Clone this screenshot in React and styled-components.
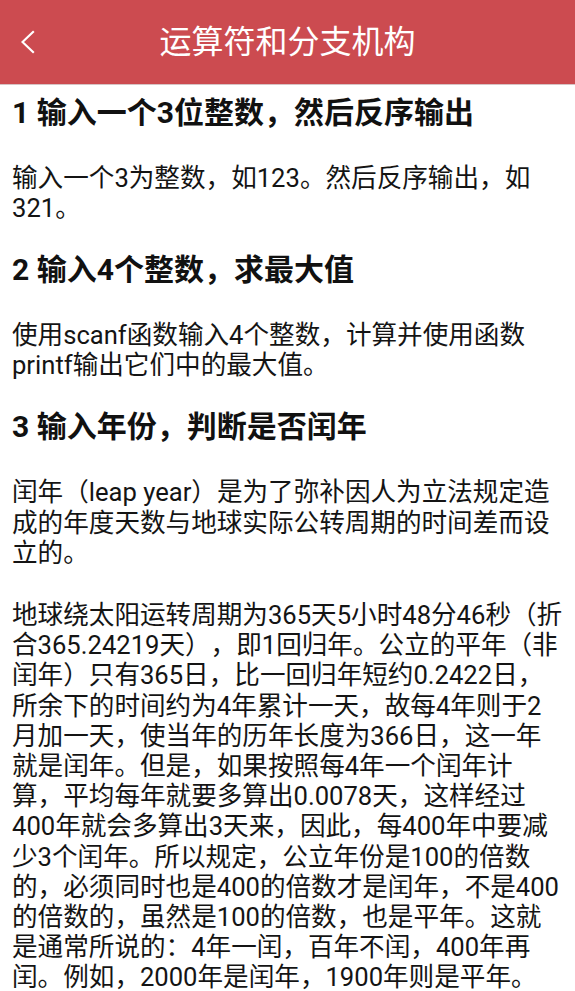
import React from "react";
import styled, { createGlobalStyle } from "styled-components";

const GlobalStyle = createGlobalStyle`
  html, body {
    margin: 0;
    padding: 0;
    background: #ffffff;
  }
  body {
    font-family: Roboto, "Noto Sans CJK SC", sans-serif;
    -webkit-font-smoothing: antialiased;
    text-spacing-trim: space-all;
  }
  * { box-sizing: border-box; }
`;

const Page = styled.div`
  width: 575px;
  min-height: 991px;
  background: #ffffff;
  display: flex;
  flex-direction: column;
`;

const TopBar = styled.header`
  height: 85px;
  background: #cc4b50;
  border-bottom: 1px solid #d6c3c4;
  display: grid;
  grid-template-columns: 1fr auto 1fr;
  align-items: center;
`;

const BackButton = styled.button`
  justify-self: start;
  display: flex;
  align-items: center;
  background: none;
  border: 0;
  padding: 0 0 0 21px;
  margin: 0;
  height: 84px;
  cursor: pointer;
`;

const Title = styled.h1`
  margin: 0;
  font-family: Roboto, "Noto Sans CJK SC", sans-serif;
  font-size: 32px;
  font-weight: 400;
  line-height: 40px;
  color: #ffffff;
  white-space: nowrap;
`;

const Content = styled.main`
  display: flex;
  flex-direction: column;
  gap: 29px;
  padding: 9.5px 11.8px 0 12px;
`;

const Section = styled.section`
  display: flex;
  flex-direction: column;
  gap: 32px;
`;

const Heading = styled.h2`
  margin: 0;
  font-family: Roboto, "Noto Sans CJK SC", sans-serif;
  font-size: 30px;
  font-weight: 700;
  line-height: 36px;
  color: #111111;
  text-spacing-trim: space-all;
`;

const Paragraph = styled.p`
  margin: 0;
  font-family: Roboto, "Noto Sans CJK SC", sans-serif;
  font-size: 25.6px;
  font-weight: 400;
  line-height: 30.2px;
  color: #141414;
  text-spacing-trim: space-all;
`;

const sections = [
  {
    title: "1 输入一个3位整数，然后反序输出",
    paragraphs: ["输入一个3为整数，如123。然后反序输出，如321。"],
  },
  {
    title: "2 输入4个整数，求最大值",
    paragraphs: [
      "使用scanf函数输入4个整数，计算并使用函数printf输出它们中的最大值。",
    ],
  },
  {
    title: "3 输入年份，判断是否闰年",
    paragraphs: [
      "闰年（leap year）是为了弥补因人为立法规定造成的年度天数与地球实际公转周期的时间差而设立的。",
      "地球绕太阳运转周期为365天5小时48分46秒（折合365.24219天），即1回归年。公立的平年（非闰年）只有365日，比一回归年短约0.2422日，所余下的时间约为4年累计一天，故每4年则于2月加一天，使当年的历年长度为366日，这一年就是闰年。但是，如果按照每4年一个闰年计算，平均每年就要多算出0.0078天，这样经过400年就会多算出3天来，因此，每400年中要减少3个闰年。所以规定，公立年份是100的倍数的，必须同时也是400的倍数才是闰年，不是400的倍数的，虽然是100的倍数，也是平年。这就是通常所说的：4年一闰，百年不闰，400年再闰。例如，2000年是闰年，1900年则是平年。",
    ],
  },
];

function BackIcon() {
  return (
    <svg width="14" height="24" viewBox="0 0 14 24" fill="none">
      <polyline
        points="12,2 1.5,12 12,22"
        stroke="#ffffff"
        strokeWidth="2.2"
        strokeLinecap="square"
        strokeLinejoin="miter"
      />
    </svg>
  );
}

export default function App() {
  return (
    <>
      <GlobalStyle />
      <Page>
        <TopBar>
          <BackButton aria-label="返回">
            <BackIcon />
          </BackButton>
          <Title>运算符和分支机构</Title>
          <span />
        </TopBar>
        <Content>
          {sections.map((s) => (
            <Section key={s.title}>
              <Heading>{s.title}</Heading>
              {s.paragraphs.map((p, i) => (
                <Paragraph key={i}>{p}</Paragraph>
              ))}
            </Section>
          ))}
        </Content>
      </Page>
    </>
  );
}
